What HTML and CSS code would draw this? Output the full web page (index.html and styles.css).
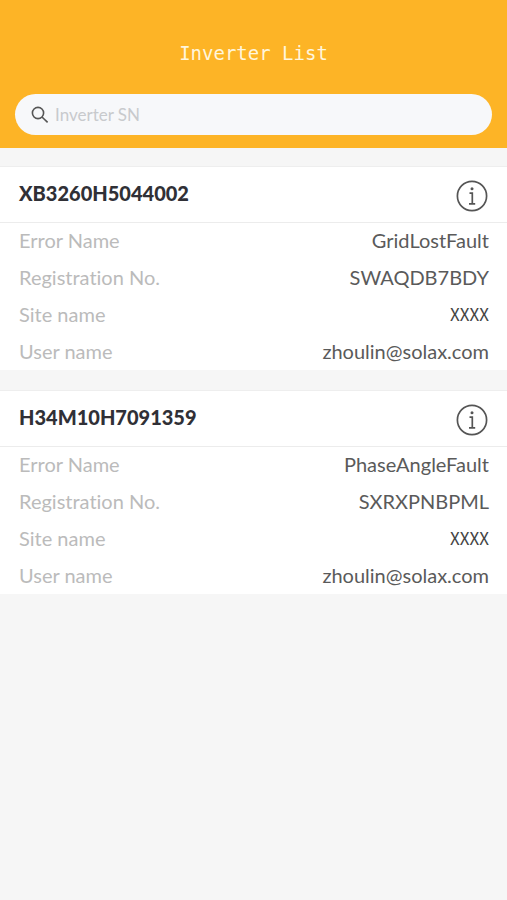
FILE: index.html
```html
<!DOCTYPE html>
<html lang="en">
<head>
<meta charset="utf-8">
<meta name="viewport" content="width=device-width, initial-scale=1">
<title>Inverter List</title>
<link rel="stylesheet" href="styles.css">
</head>
<body>
<header class="header">
  <h1 class="title">Inverter List</h1>
  <label class="search">
    <svg class="search-icon" viewBox="0 0 18 18" aria-hidden="true"><circle cx="7" cy="7" r="5.6"/><path d="M11 11l5.6 5.4"/></svg>
    <input class="search-input" type="search" placeholder="Inverter SN" aria-label="Inverter SN">
  </label>
</header>
<main class="list">
  <section class="card">
    <div class="card-head">
      <h2 class="serial">XB3260H5044002</h2>
      <button class="info" type="button" aria-label="Details">
        <svg class="info-icon" viewBox="0 0 32 32" aria-hidden="true"><circle cx="16" cy="16" r="14.6"/><path d="M13.5 13.2h2.8v10.6M13 23.9h6.2"/><circle class="dot" cx="16" cy="8.8" r="1.5"/></svg>
      </button>
    </div>
    <dl class="details">
      <div class="row"><dt>Error Name</dt><dd>GridLostFault</dd></div>
      <div class="row"><dt>Registration No.</dt><dd>SWAQDB7BDY</dd></div>
      <div class="row"><dt>Site name</dt><dd class="masked">XXXX</dd></div>
      <div class="row"><dt>User name</dt><dd>zhoulin@solax.com</dd></div>
    </dl>
  </section>
  <section class="card">
    <div class="card-head">
      <h2 class="serial">H34M10H7091359</h2>
      <button class="info" type="button" aria-label="Details">
        <svg class="info-icon" viewBox="0 0 32 32" aria-hidden="true"><circle cx="16" cy="16" r="14.6"/><path d="M13.5 13.2h2.8v10.6M13 23.9h6.2"/><circle class="dot" cx="16" cy="8.8" r="1.5"/></svg>
      </button>
    </div>
    <dl class="details">
      <div class="row"><dt>Error Name</dt><dd>PhaseAngleFault</dd></div>
      <div class="row"><dt>Registration No.</dt><dd>SXRXPNBPML</dd></div>
      <div class="row"><dt>Site name</dt><dd class="masked">XXXX</dd></div>
      <div class="row"><dt>User name</dt><dd>zhoulin@solax.com</dd></div>
    </dl>
  </section>
</main>
</body>
</html>
```
FILE: styles.css
```css
* { box-sizing: border-box; margin: 0; padding: 0; }
body { background: #f6f6f6; font-family: Lato, sans-serif; font-size: 20px; font-variant-ligatures: none; color: #5a5a5a; }
.header { background: #fdb426; padding: 40px 15px 13px; }
.title { font-family: "DejaVu Sans Mono", monospace; font-size: 19px; line-height: 26px; font-weight: 400; text-align: center; color: #fff6dc; margin-bottom: 28px; }
.search { display: flex; align-items: center; gap: 6px; height: 41px; padding: 0 16px; border-radius: 21px; background: #f7f8fa; }
.search-icon { flex: none; width: 18px; height: 18px; fill: none; stroke: #555; stroke-width: 1.6; }
.search-input { flex: 1; min-width: 0; border: 0; outline: 0; background: none; font: 17px/24px Lato, sans-serif; color: #555; appearance: none; }
.search-input::placeholder { color: #c8cacd; opacity: 1; }
.list { display: flex; flex-direction: column; gap: 20px; padding-top: 18px; }
.card { background: #fff; border-top: 1px solid #eee; }
.card-head { display: flex; align-items: center; justify-content: space-between; height: 56px; padding: 2px 19px 0; border-bottom: 1px solid #ececec; }
.serial { font-size: 20px; line-height: 24px; font-weight: 900; color: #303036; padding-bottom: 6px; }
.info { width: 32px; height: 32px; border: 0; background: none; cursor: pointer; }
.info-icon { display: block; width: 32px; height: 32px; fill: none; stroke: #555; stroke-width: 1.7; }
.info-icon .dot { fill: #555; stroke: none; }
.details { padding-bottom: 1px; }
.row { display: flex; align-items: center; justify-content: space-between; line-height: 24px; padding: 5px 18px 8px 19px; }
.row:last-child { padding-bottom: 6px; }
dt { color: #bbb; }
.masked { font-family: "Noto Sans CJK SC", sans-serif; font-size: 17px; color: #444; }
```
